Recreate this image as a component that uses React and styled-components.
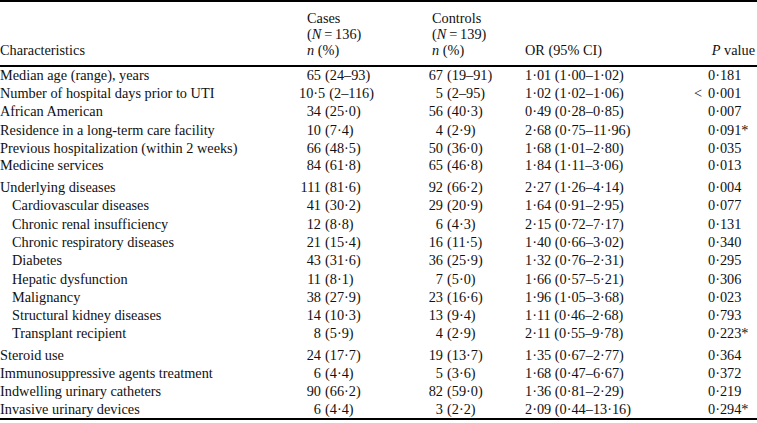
import React from 'react';
import styled, { createGlobalStyle } from 'styled-components';

const GlobalStyle = createGlobalStyle`
  html, body { margin: 0; padding: 0; background: #fff; }
  body { font-family: "Liberation Serif", "Times New Roman", serif; color: #111; }
`;

const rows = [
  { label: 'Median age (range), years', cases: ['65', '(24–93)'], controls: ['67', '(19–91)'], or: '1·01 (1·00–1·02)', p: '0·181' },
  { label: 'Number of hospital days prior to UTI', cases: ['10·5', '(2–116)'], controls: ['5', '(2–95)'], or: '1·02 (1·02–1·06)', p: '0·001', lt: true },
  { label: 'African American', cases: ['34', '(25·0)'], controls: ['56', '(40·3)'], or: '0·49 (0·28–0·85)', p: '0·007' },
  { label: 'Residence in a long-term care facility', cases: ['10', '(7·4)'], controls: ['4', '(2·9)'], or: '2·68 (0·75–11·96)', p: '0·091*' },
  { label: 'Previous hospitalization (within 2 weeks)', cases: ['66', '(48·5)'], controls: ['50', '(36·0)'], or: '1·68 (1·01–2·80)', p: '0·035' },
  { label: 'Medicine services', cases: ['84', '(61·8)'], controls: ['65', '(46·8)'], or: '1·84 (1·11–3·06)', p: '0·013', gapAfter: true },
  { label: 'Underlying diseases', cases: ['111', '(81·6)'], controls: ['92', '(66·2)'], or: '2·27 (1·26–4·14)', p: '0·004' },
  { label: 'Cardiovascular diseases', sub: true, cases: ['41', '(30·2)'], controls: ['29', '(20·9)'], or: '1·64 (0·91–2·95)', p: '0·077' },
  { label: 'Chronic renal insufficiency', sub: true, cases: ['12', '(8·8)'], controls: ['6', '(4·3)'], or: '2·15 (0·72–7·17)', p: '0·131' },
  { label: 'Chronic respiratory diseases', sub: true, cases: ['21', '(15·4)'], controls: ['16', '(11·5)'], or: '1·40 (0·66–3·02)', p: '0·340' },
  { label: 'Diabetes', sub: true, cases: ['43', '(31·6)'], controls: ['36', '(25·9)'], or: '1·32 (0·76–2·31)', p: '0·295' },
  { label: 'Hepatic dysfunction', sub: true, cases: ['11', '(8·1)'], controls: ['7', '(5·0)'], or: '1·66 (0·57–5·21)', p: '0·306' },
  { label: 'Malignancy', sub: true, cases: ['38', '(27·9)'], controls: ['23', '(16·6)'], or: '1·96 (1·05–3·68)', p: '0·023' },
  { label: 'Structural kidney diseases', sub: true, cases: ['14', '(10·3)'], controls: ['13', '(9·4)'], or: '1·11 (0·46–2·68)', p: '0·793' },
  { label: 'Transplant recipient', sub: true, cases: ['8', '(5·9)'], controls: ['4', '(2·9)'], or: '2·11 (0·55–9·78)', p: '0·223*', gapAfter: true },
  { label: 'Steroid use', cases: ['24', '(17·7)'], controls: ['19', '(13·7)'], or: '1·35 (0·67–2·77)', p: '0·364' },
  { label: 'Immunosuppressive agents treatment', cases: ['6', '(4·4)'], controls: ['5', '(3·6)'], or: '1·68 (0·47–6·67)', p: '0·372' },
  { label: 'Indwelling urinary catheters', cases: ['90', '(66·2)'], controls: ['82', '(59·0)'], or: '1·36 (0·81–2·29)', p: '0·219' },
  { label: 'Invasive urinary devices', cases: ['6', '(4·4)'], controls: ['3', '(2·2)'], or: '2·09 (0·44–13·16)', p: '0·294*' },
];

const Page = styled.div`
  width: 757px;
  height: 423px;
  overflow: hidden;
`;

const Table = styled.table`
  width: 757px;
  border-collapse: collapse;
  table-layout: fixed;
  font-size: 14.3px;
  border-top: 2px solid #000;
  border-bottom: 2px solid #000;
`;

const Head = styled.thead`
  border-bottom: 2px solid #000;
`;

const HeadCell = styled.th`
  font-weight: normal;
  text-align: ${(p) => p.$align || 'left'};
  vertical-align: bottom;
  line-height: 16px;
  padding: 8px ${(p) => (p.$align === 'right' ? 2 : 0)}px 7px ${(p) => p.$pad || 0}px;
`;

const Row = styled.tr`
  height: ${(p) => (p.$gap ? 21 : 18.3)}px;
`;

const Cell = styled.td`
  padding: 0 0 0 ${(p) => p.$pad || 0}px;
  line-height: 17px;
  vertical-align: ${(p) => (p.$gap ? 'top' : 'middle')};
  white-space: nowrap;
`;

const LabelCell = styled(Cell)`
  padding-left: ${(p) => (p.$sub ? 12 : 0)}px;
`;

const Num = styled.span`
  display: inline-block;
  min-width: ${(p) => p.$w}px;
  text-align: right;
  padding-right: 4px;
`;

const Lt = styled.span`
  display: inline-block;
  margin-left: -14px;
  width: 14px;
`;

const Em = styled.i`
  font-style: italic;
`;

export default function App() {
  return (
    <Page>
      <GlobalStyle />
      <Table>
        <colgroup>
          <col style={{ width: 299 }} />
          <col style={{ width: 129 }} />
          <col style={{ width: 97 }} />
          <col style={{ width: 180 }} />
          <col style={{ width: 52 }} />
        </colgroup>
        <Head>
          <tr>
            <HeadCell>Characteristics</HeadCell>
            <HeadCell $pad={8}>
              Cases<br />(<Em>N</Em>&thinsp;=&thinsp;136)<br /><Em>n</Em> (%)
            </HeadCell>
            <HeadCell $pad={4}>
              Controls<br />(<Em>N</Em>&thinsp;=&thinsp;139)<br /><Em>n</Em> (%)
            </HeadCell>
            <HeadCell>OR (95% CI)</HeadCell>
            <HeadCell $align="right"><Em>P</Em> value</HeadCell>
          </tr>
        </Head>
        <tbody>
          {rows.map((r) => (
            <Row key={r.label} $gap={r.gapAfter}>
              <LabelCell $sub={r.sub} $gap={r.gapAfter}>{r.label}</LabelCell>
              <Cell $gap={r.gapAfter}>
                <Num $w={22}>{r.cases[0]}</Num>{r.cases[1]}
              </Cell>
              <Cell $gap={r.gapAfter}>
                <Num $w={15}>{r.controls[0]}</Num>{r.controls[1]}
              </Cell>
              <Cell $gap={r.gapAfter}>{r.or}</Cell>
              <Cell $gap={r.gapAfter} $pad={3}>
                {r.lt && <Lt>&lt;</Lt>}
                {r.p}
              </Cell>
            </Row>
          ))}
        </tbody>
      </Table>
    </Page>
  );
}
